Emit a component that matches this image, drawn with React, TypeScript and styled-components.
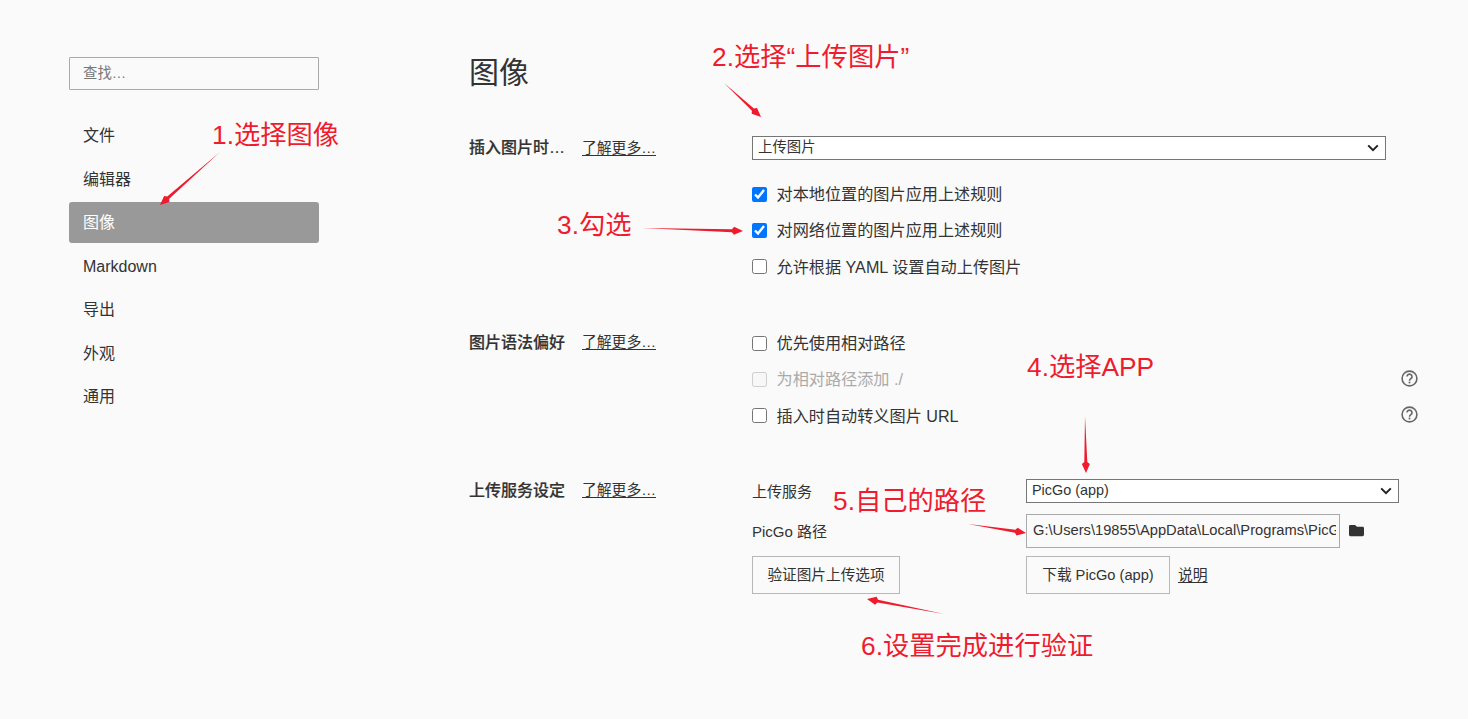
import React from "react";
import styled, { createGlobalStyle } from "styled-components";
import { FaFolder } from "react-icons/fa";

const FONT = `"Liberation Sans", "Noto Sans CJK SC", sans-serif`;

const CHEVRON = `url("data:image/svg+xml,%3Csvg xmlns='http://www.w3.org/2000/svg' width='12' height='8' viewBox='0 0 12 8'%3E%3Cpath d='M1.2 1.4 6 6.2l4.8-4.8' fill='none' stroke='%23222' stroke-width='2'/%3E%3C/svg%3E")`;

const Global = createGlobalStyle`
  html, body { margin: 0; padding: 0; background: #fafafa; overflow: hidden; }
  * { box-sizing: border-box; }
  body { font-family: ${FONT}; color: #333; }
`;

const Page = styled.div`
  position: relative;
  width: 1468px;
  height: 719px;
  display: flex;
  padding-left: 69px;
  gap: 150px;
  overflow: hidden;
`;

const Sidebar = styled.aside`
  width: 250px;
  padding-top: 57px;
  flex: none;
`;

const Search = styled.input`
  display: block;
  width: 250px;
  height: 33px;
  padding: 0 13px 2px;
  border: 1px solid #aaa;
  border-radius: 1px;
  background: #fafafa;
  font: 14.4px ${FONT};
  outline: none;
  &::placeholder { color: #777; opacity: 1; }
`;

const Nav = styled.nav`
  margin-top: 25px;
  display: flex;
  flex-direction: column;
  gap: 2.5px;
`;

const NavItem = styled.div<{ $active?: boolean }>`
  height: 41px;
  line-height: 41px;
  padding-left: 14px;
  font-size: 16px;
  border-radius: 3px;
  color: ${(p) => (p.$active ? "#fff" : "#333")};
  background: ${(p) => (p.$active ? "#999" : "transparent")};
`;

const Main = styled.main`
  flex: 1;
  padding-top: 53px;
`;

const Title = styled.h1`
  margin: 0 0 43px;
  height: 40px;
  line-height: 40px;
  font-size: 30px;
  font-weight: 400;
`;

const Section = styled.section<{ $gap: number }>`
  display: grid;
  grid-template-columns: 283px 666px;
  margin-bottom: ${(p) => p.$gap}px;
`;

const Heading = styled.div<{ $height: number }>`
  display: flex;
  align-items: center;
  gap: 17px;
  height: ${(p) => p.$height}px;
  padding-bottom: 4px;
`;

const HeadingText = styled.strong`
  font-size: 16px;
  font-weight: 500;
  -webkit-text-stroke: 0.2px #333;
`;

const Link = styled.a`
  font-size: 14.8px;
  color: #333;
  text-decoration: underline;
  text-underline-offset: 2px;
`;

const ManualLink = styled(Link)`
  margin-bottom: 2px;
`;

const Select = styled.select<{ $width: number }>`
  display: block;
  appearance: none;
  width: ${(p) => p.$width}px;
  height: 24px;
  padding: 0 20px 2px 5px;
  border: 1px solid #767676;
  border-radius: 0;
  background: #fff ${CHEVRON} no-repeat right 6px center;
  color: #333;
  font: 14.4px ${FONT};
  outline: none;
`;

const Options = styled.div<{ $top: number }>`
  margin-top: ${(p) => p.$top}px;
  display: flex;
  flex-direction: column;
`;

const CheckRow = styled.label<{ $disabled?: boolean }>`
  height: 36.3px;
  display: flex;
  align-items: center;
  gap: 9.5px;
  font-size: 16.15px;
  color: ${(p) => (p.$disabled ? "#aaa" : "#333")};
`;

const CheckText = styled.span`
  padding-bottom: 2px;
`;

const Check = styled.input.attrs({ type: "checkbox" })`
  width: 15px;
  height: 15px;
  margin: 0;
  flex: none;
`;

const HelpSvg = styled.svg`
  margin-left: auto;
  margin-bottom: 2px;
  flex: none;
`;

function Help() {
  return (
    <HelpSvg width={17} height={17} viewBox="0 0 17 17" fill="none" stroke="#666">
      <circle cx="8.5" cy="8.5" r="7.4" strokeWidth="1.6" />
      <path d="M6 6.6a2.5 2.5 0 1 1 3.9 2.1c-.9.6-1.4 1-1.4 2" strokeWidth="1.6" />
      <circle cx="8.5" cy="12.6" r="1" fill="#666" stroke="none" />
    </HelpSvg>
  );
}

const ServiceGrid = styled.div`
  display: grid;
  grid-template-columns: 274px 392px;
  grid-template-rows: 24px 37px 38px;
  row-gap: 8px;
  align-items: center;
  font-size: 15px;
`;

const RowLabel = styled.span<{ $drop?: number }>`
  margin-top: ${(p) => p.$drop ?? 0}px;
  padding-bottom: 1px;
`;

const PathCell = styled.div`
  display: flex;
  align-items: center;
  gap: 9px;
  margin-top: 3px;
`;

const PathInput = styled.input`
  width: 314px;
  height: 34px;
  padding: 0 3px 2px 6px;
  border: 1px solid #aaa;
  background: #fafafa;
  color: #333;
  font: 14.7px ${FONT};
  outline: none;
`;

const FolderIcon = styled(FaFolder)`
  color: #333;
  flex: none;
`;

const Button = styled.button<{ $width: number }>`
  width: ${(p) => p.$width}px;
  height: 38px;
  padding: 0 0 2px;
  border: 1px solid #b8b8b8;
  background: transparent;
  color: #333;
  font: 14.65px ${FONT};
`;

const DownloadCell = styled.div`
  display: flex;
  align-items: center;
  gap: 8px;
`;

const Note = styled.div<{ $x: number; $y: number }>`
  position: absolute;
  left: ${(p) => p.$x}px;
  top: ${(p) => p.$y}px;
  height: 40px;
  line-height: 40px;
  font-size: 26.3px;
  color: #ee1c2e;
  white-space: nowrap;
`;

const ArrowLayer = styled.svg`
  position: absolute;
  inset: 0;
  pointer-events: none;
`;

function Arrow({ from, to }: { from: [number, number]; to: [number, number] }) {
  const dx = to[0] - from[0];
  const dy = to[1] - from[1];
  const len = Math.hypot(dx, dy);
  const ux = dx / len;
  const uy = dy / len;
  const nx = -uy;
  const ny = ux;
  const head = 11;
  const bx = to[0] - ux * head;
  const by = to[1] - uy * head;
  const neck = to[0] - ux * (head - 2);
  const necky = to[1] - uy * (head - 2);
  const pts: [number, number][] = [
    from,
    [bx + nx * 1.5, by + ny * 1.5],
    [neck + nx * 4, necky + ny * 4],
    to,
    [neck - nx * 4, necky - ny * 4],
    [bx - nx * 1.5, by - ny * 1.5],
  ];
  return <polygon points={pts.map((p) => p.join(",")).join(" ")} fill="#ee1c2e" />;
}

export default function App() {
  return (
    <Page>
      <Global />
      <Sidebar>
        <Search placeholder="查找…" />
        <Nav>
          <NavItem>文件</NavItem>
          <NavItem>编辑器</NavItem>
          <NavItem $active>图像</NavItem>
          <NavItem>Markdown</NavItem>
          <NavItem>导出</NavItem>
          <NavItem>外观</NavItem>
          <NavItem>通用</NavItem>
        </Nav>
      </Sidebar>
      <Main>
        <Title>图像</Title>
        <Section $gap={40.1}>
          <Heading $height={24}>
            <HeadingText>插入图片时…</HeadingText>
            <Link>了解更多…</Link>
          </Heading>
          <div>
            <Select $width={634}>
              <option>上传图片</option>
            </Select>
            <Options $top={16}>
              <CheckRow><Check defaultChecked /><CheckText>对本地位置的图片应用上述规则</CheckText></CheckRow>
              <CheckRow><Check defaultChecked /><CheckText>对网络位置的图片应用上述规则</CheckText></CheckRow>
              <CheckRow><Check /><CheckText>允许根据 YAML 设置自动上传图片</CheckText></CheckRow>
            </Options>
          </div>
        </Section>
        <Section $gap={45.1}>
          <Heading $height={36}>
            <HeadingText>图片语法偏好</HeadingText>
            <Link>了解更多…</Link>
          </Heading>
          <Options $top={0}>
            <CheckRow><Check /><CheckText>优先使用相对路径</CheckText></CheckRow>
            <CheckRow $disabled><Check disabled /><CheckText>为相对路径添加 ./</CheckText><Help /></CheckRow>
            <CheckRow><Check /><CheckText>插入时自动转义图片 URL</CheckText><Help /></CheckRow>
          </Options>
        </Section>
        <Section $gap={0}>
          <Heading $height={24}>
            <HeadingText>上传服务设定</HeadingText>
            <Link>了解更多…</Link>
          </Heading>
          <ServiceGrid>
            <RowLabel>上传服务</RowLabel>
            <Select $width={373}>
              <option>PicGo (app)</option>
            </Select>
            <RowLabel $drop={3}>PicGo 路径</RowLabel>
            <PathCell>
              <PathInput readOnly value={"G:\\Users\\19855\\AppData\\Local\\Programs\\PicGo\\PicGo.exe"} />
              <FolderIcon size={15} />
            </PathCell>
            <Button $width={148}>验证图片上传选项</Button>
            <DownloadCell>
              <Button $width={144}>下载 PicGo (app)</Button>
              <ManualLink>说明</ManualLink>
            </DownloadCell>
          </ServiceGrid>
        </Section>
      </Main>
      <Note $x={212} $y={115}>1.选择图像</Note>
      <Note $x={712} $y={37}>2.选择“上传图片”</Note>
      <Note $x={557} $y={205}>3.勾选</Note>
      <Note $x={1027} $y={347}>4.选择APP</Note>
      <Note $x={833} $y={481}>5.自己的路径</Note>
      <Note $x={861} $y={626}>6.设置完成进行验证</Note>
      <ArrowLayer width={1468} height={719} viewBox="0 0 1468 719">
        <Arrow from={[220, 152]} to={[160, 205]} />
        <Arrow from={[724, 83]} to={[761, 117]} />
        <Arrow from={[642, 228]} to={[743, 231]} />
        <Arrow from={[1085, 416]} to={[1086, 473]} />
        <Arrow from={[968, 524]} to={[1026, 533]} />
        <Arrow from={[944, 614]} to={[867, 599]} />
      </ArrowLayer>
    </Page>
  );
}
